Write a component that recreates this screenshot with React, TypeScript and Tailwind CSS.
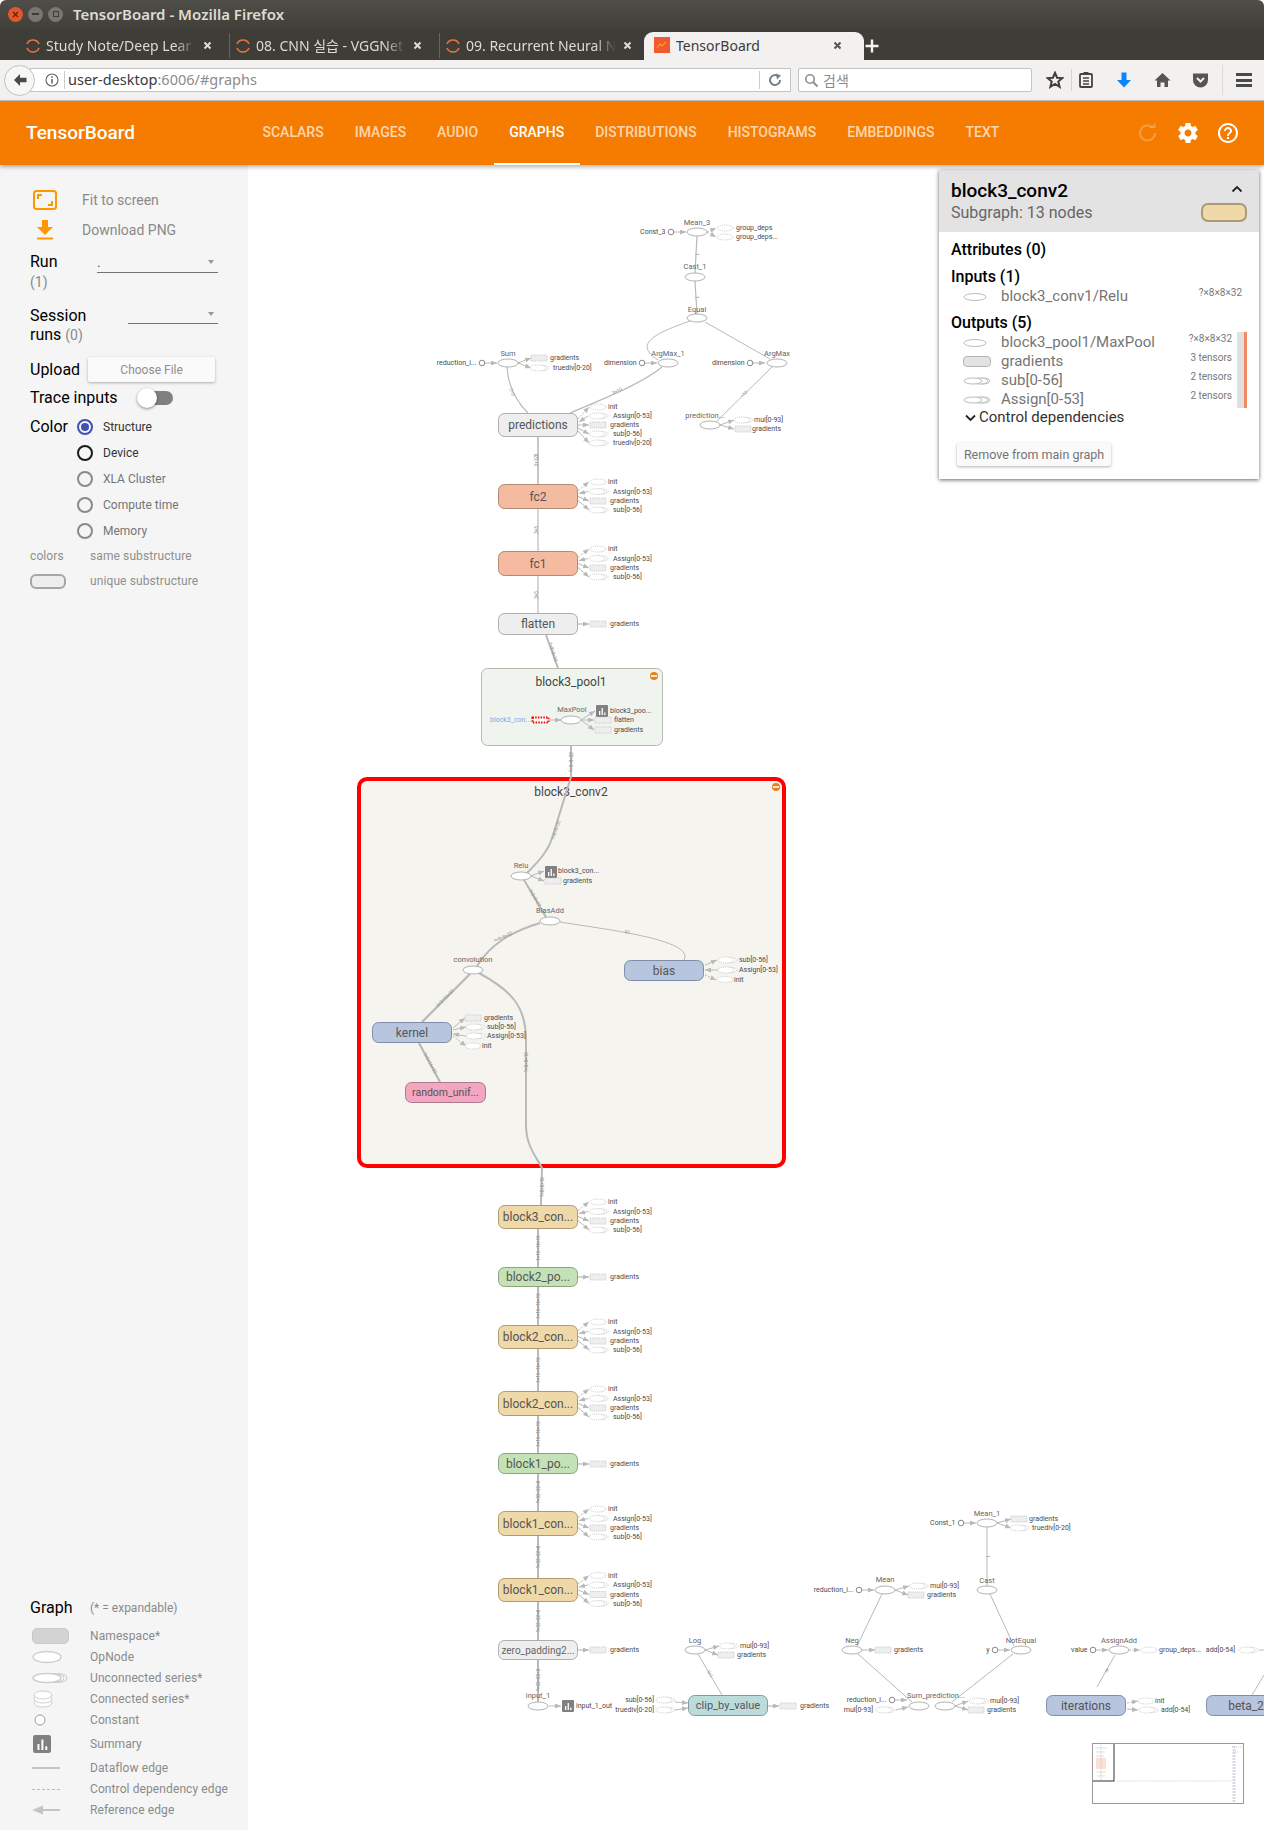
import React from "react";

const E = "#b9b9b9";
const T = "#4a4a4a";

function Spinner() {
  return (
    <svg width="16" height="16" viewBox="0 0 16 16" className="shrink-0">
      <path d="M2 6 A6.5 6.5 0 0 1 14 6" fill="none" stroke="#e8743b" strokeWidth="1.6" />
      <path d="M2 10 A6.5 6.5 0 0 0 14 10" fill="none" stroke="#e8743b" strokeWidth="1.6" />
    </svg>
  );
}

function TabX({ dark }: { dark?: boolean }) {
  return (
    <svg width="9" height="9" viewBox="0 0 9 9" className="shrink-0">
      <path d="M1.5 1.5 L7.5 7.5 M7.5 1.5 L1.5 7.5" stroke={dark ? "#555" : "#ddd"} strokeWidth="2" />
    </svg>
  );
}

function InactiveTab({ title }: { title: string }) {
  return (
    <div className="w-[210px] h-full flex items-center pl-[5px] shrink-0 border-r border-[#66655f]">
      <Spinner />
      <span className="ml-[5px] w-[150px] whitespace-nowrap text-[14px] text-[#dcdbd6] [font-family:'Noto_Sans','Noto_Sans_CJK_KR',sans-serif] [mask-image:linear-gradient(to_right,black_86%,transparent)]">
        {title}
      </span>
      <span className="ml-[7px]"><TabX /></span>
    </div>
  );
}

function TitleBar() {
  return (
    <div className="h-[30px] pb-[2px] flex items-center pl-[8px] bg-gradient-to-b from-[#4f4e48] to-[#403f3a] rounded-t-[6px]">
      <div className="flex gap-[5px] items-center">
        <div className="w-[15px] h-[15px] rounded-full bg-[#e2572b] text-[#5a2010] flex items-center justify-center"><svg width="7" height="7" viewBox="0 0 7 7"><path d="M1 1L6 6M6 1L1 6" stroke="#5a2010" strokeWidth="1.2" /></svg></div>
        <div className="w-[15px] h-[15px] rounded-full bg-[#77766f] flex items-center justify-center"><div className="w-[7px] h-[1.5px] bg-[#3d3c37]" /></div>
        <div className="w-[15px] h-[15px] rounded-full bg-[#77766f] flex items-center justify-center"><div className="w-[6px] h-[6px] border border-[#3d3c37]" /></div>
      </div>
      <span className="ml-[10px] text-[15px] font-semibold text-[#dfdbd2] [font-family:'Noto_Sans',sans-serif]">TensorBoard - Mozilla Firefox</span>
    </div>
  );
}

function TabStrip() {
  return (
    <div className="h-[30px] flex items-end pl-[20px] bg-[#3e3d38]">
      <div className="flex h-[25px] mb-[2px]">
        <InactiveTab title="Study Note/Deep Lear" />
        <InactiveTab title="08. CNN 실습 - VGGNet" />
        <InactiveTab title="09. Recurrent Neural N" />
      </div>
      <div className="h-[28px] pb-[2px] w-[220px] -ml-[6px] bg-[#f2f1ef] rounded-t-[9px] flex items-center pl-[10px] shrink-0">
        <svg width="16" height="16" viewBox="0 0 16 16" className="shrink-0">
          <rect width="16" height="16" fill="#f15a31" />
          <path d="M3 11L6 7L8 9L12 5" fill="none" stroke="#f7a21b" strokeWidth="1.2" />
        </svg>
        <span className="ml-[6px] w-[157px] text-[14px] text-[#3c3b37] [font-family:'Noto_Sans',sans-serif]">TensorBoard</span>
        <TabX dark />
      </div>
      <svg width="16" height="16" viewBox="0 0 16 16" className="ml-[0px] mb-[6px] shrink-0">
        <path d="M8 1.5V14.5M1.5 8H14.5" stroke="#f4f4f4" strokeWidth="2.4" />
      </svg>
    </div>
  );
}

function NavBar() {
  return (
    <div className="h-[41px] bg-[#f2f1ef] border-b border-[#c4c3c0] flex items-center pl-[4px] [font-family:'Noto_Sans','Noto_Sans_CJK_KR',sans-serif]">
      <div className="z-10 w-[31px] h-[31px] rounded-full bg-[#f7f7f6] border border-[#c2c2c0] flex items-center justify-center shrink-0">
        <svg width="16" height="16" viewBox="0 0 16 16"><path d="M8 2 L2 8 L8 14 V10.3 H14.5 V5.7 H8 Z" fill="#4a4a4a" /></svg>
      </div>
      <div className="-ml-[5px] w-[761px] h-[24px] bg-white border border-[#c4c4c4] flex items-center pl-[14px] shrink-0">
        <svg width="14" height="14" viewBox="0 0 14 14" className="shrink-0"><circle cx="7" cy="7" r="6" fill="none" stroke="#666" strokeWidth="1.1" /><rect x="6.2" y="6" width="1.6" height="4.5" fill="#666" /><rect x="6.2" y="3.3" width="1.6" height="1.6" fill="#666" /></svg>
        <div className="ml-[5px] w-px h-[18px] bg-[#ccc]" />
        <span className="ml-[3px] text-[14.5px] text-[#3a3a3a] w-[691px]">user-desktop<span className="text-[#8c8c8c]">:6006/#graphs</span></span>
        <div className="w-px h-[18px] bg-[#ccc]" />
        <svg width="14" height="14" viewBox="0 0 14 14" className="ml-[8px]"><path d="M12 7A5 5 0 1 1 9.5 2.7" fill="none" stroke="#7a8087" strokeWidth="2" /><path d="M8 0.5L13 2.5L9 6.5Z" fill="#7a8087" /></svg>
      </div>
      <div className="ml-[7px] w-[234px] h-[24px] bg-white border border-[#c4c4c4] rounded-[2px] flex items-center pl-[5px] shrink-0">
        <svg width="15" height="15" viewBox="0 0 15 15"><circle cx="6" cy="6" r="4.2" fill="none" stroke="#8a8f94" strokeWidth="1.6" /><path d="M9 9L13.5 13.5" stroke="#8a8f94" strokeWidth="2" /></svg>
        <span className="ml-[4px] text-[14px] text-[#8a8a8a] [font-family:'Noto_Sans_CJK_KR',sans-serif]">검색</span>
      </div>
      <div className="ml-[14px] flex items-center">
        <svg width="18" height="18" viewBox="0 0 18 18"><path d="M9 1.8L11.1 6.7L16.4 7.1L12.3 10.6L13.6 15.8L9 13L4.4 15.8L5.7 10.6L1.6 7.1L6.9 6.7Z" fill="none" stroke="#3f3f3f" strokeWidth="2" /></svg>
        <div className="ml-[7px] w-px h-[22px] bg-[#d5d4d1]" />
        <svg width="16" height="18" viewBox="0 0 16 18" className="ml-[6px]"><rect x="2" y="3" width="12" height="13" rx="1" fill="none" stroke="#444" strokeWidth="1.8" /><rect x="5.5" y="1" width="5" height="3" fill="#444" /><path d="M5 7H11M5 10H11M5 13H11" stroke="#444" strokeWidth="1.5" /></svg>
        <svg width="16" height="18" viewBox="0 0 16 18" className="ml-[22px]"><path d="M5.5 1.5H10.5V9H15L8 16.5L1 9H5.5Z" fill="#0a84ff" /></svg>
        <svg width="17" height="16" viewBox="0 0 17 16" className="ml-[22px]"><path d="M8.5 1L16.5 8.5H14V15H10.5V10.5H6.5V15H3V8.5H0.5Z" fill="#555" /></svg>
        <svg width="17" height="16" viewBox="0 0 17 16" className="ml-[21px]"><path d="M1 1.5H16V8A7.5 7.5 0 0 1 1 8Z" fill="#555" /><path d="M5 6L8.5 9.5L12 6" fill="none" stroke="#f2f1ef" strokeWidth="2" /></svg>
        <div className="ml-[13px] w-px h-[30px] bg-[#dcdbd8]" />
        <div className="ml-[13px] w-[16px] flex flex-col gap-[2.5px]">
          <div className="h-[3px] bg-[#4a4a4a]" /><div className="h-[3px] bg-[#4a4a4a]" /><div className="h-[3px] bg-[#4a4a4a]" />
        </div>
      </div>
    </div>
  );
}

const TABS = ["Scalars", "Images", "Audio", "Graphs", "Distributions", "Histograms", "Embeddings", "Text"];

function Header() {
  return (
    <div className="relative z-20 h-[64px] bg-[#f57c00] shadow-[0_2px_4px_rgba(0,0,0,0.3)] flex items-stretch pl-[26px] [font-family:Roboto,sans-serif]">
      <div className="w-[221px] flex items-center text-[19px] font-medium text-white">TensorBoard</div>
      <div className="flex">
        {TABS.map((t) => (
          <div key={t} className={"px-[15.5px] pt-[1px] flex items-center border-b-2 text-[14px] font-medium uppercase " + (t === "Graphs" ? "border-white text-white" : "border-transparent text-white/70")}>
            {t}
          </div>
        ))}
      </div>
      <div className="ml-auto mr-[24px] flex items-center gap-[16px]">
        <svg width="24" height="24" viewBox="0 0 24 24" fill="none" stroke="#ffffff" strokeOpacity="0.25" strokeWidth="2"><path d="M19 12A7.5 7.5 0 1 1 16.5 6.4" /><path d="M14 7H19.5V1.5" fill="#fff" fillOpacity="0.25" stroke="none" /></svg>
        <svg width="24" height="24" viewBox="0 0 24 24" fill="#fff"><path d="M19.43 12.98c.04-.32.07-.64.07-.98s-.03-.66-.07-.98l2.11-1.65c.19-.15.24-.42.12-.64l-2-3.46c-.12-.22-.39-.3-.61-.22l-2.49 1c-.52-.4-1.08-.73-1.69-.98l-.38-2.65C14.46 2.18 14.25 2 14 2h-4c-.25 0-.46.18-.49.42l-.38 2.65c-.61.25-1.17.59-1.69.98l-2.49-1c-.23-.09-.49 0-.61.22l-2 3.46c-.13.22-.07.49.12.64l2.11 1.65c-.04.32-.07.65-.07.98s.03.66.07.98l-2.11 1.65c-.19.15-.24.42-.12.64l2 3.46c.12.22.39.3.61.22l2.49-1c.52.4 1.08.73 1.69.98l.38 2.65c.03.24.24.42.49.42h4c.25 0 .46-.18.49-.42l.38-2.65c.61-.25 1.17-.59 1.69-.98l2.49 1c.23.09.49 0 .61-.22l2-3.46c.12-.22.07-.49-.12-.64l-2.11-1.65zM12 15.5c-1.93 0-3.5-1.57-3.5-3.5s1.57-3.5 3.5-3.5 3.5 1.57 3.5 3.5-1.57 3.5-3.5 3.5z" /></svg>
        <svg width="24" height="24" viewBox="0 0 24 24" fill="#fff"><path d="M11 18h2v-2h-2v2zm1-16C6.48 2 2 6.48 2 12s4.48 10 10 10 10-4.48 10-10S17.52 2 12 2zm0 18c-4.41 0-8-3.59-8-8s3.59-8 8-8 8 3.59 8 8-3.59 8-8 8zm0-14c-2.21 0-4 1.79-4 4h2c0-1.1.9-2 2-2s2 .9 2 2c0 2-3 1.75-3 5h2c0-2.25 3-2.5 3-5 0-2.21-1.79-4-4-4z" /></svg>
      </div>
    </div>
  );
}

function Caret() {
  return <div className="w-0 h-0 border-l-[3.5px] border-r-[3.5px] border-t-[4px] border-l-transparent border-r-transparent border-t-[#999]" />;
}

function Radio({ state, label }: { state: "on" | "focus" | "off"; label: string }) {
  const ring = state === "on" ? "border-[#3f51b5]" : state === "focus" ? "border-[#1a1a1a]" : "border-[#8a8a8a]";
  const txt = state === "off" ? "text-[#757575]" : "text-[#333]";
  return (
    <div className="h-[26px] flex items-center">
      <div className={"w-[16px] h-[16px] rounded-full border-2 flex items-center justify-center " + ring}>
        {state === "on" && <div className="w-[8px] h-[8px] rounded-full bg-[#3f51b5]" />}
      </div>
      <span className={"ml-[10px] pt-[1px] text-[12px] " + txt}>{label}</span>
    </div>
  );
}

function LegendRow({ icon, label, h = "h-[21px]" }: { icon: React.ReactNode; label: string; h?: string }) {
  return (
    <div className={"flex items-center " + h}>
      <div className="w-[60px] shrink-0 flex items-center">{icon}</div>
      <span className="whitespace-nowrap text-[12px] tracking-[0.1px] text-[#8a8a8a]">{label}</span>
    </div>
  );
}

function Bars({ size, rx = 1.5 }: { size: number; rx?: number }) {
  return (
    <svg width={size} height={size} viewBox="0 0 12 12">
      <rect width="12" height="12" rx={rx} fill="#808080" />
      <path d="M3 6V10H4.3V6ZM5.6 3V10H6.9V3ZM8.2 7.5V10H9.5V7.5Z" fill="#fff" />
    </svg>
  );
}

function Sidebar() {
  const ell = "fill-white stroke-[#cfcfcf]";
  return (
    <div className="w-[248px] shrink-0 bg-[#f5f5f5] flex flex-col justify-between pl-[30px] pr-[30px] pb-[9.5px] [font-family:Roboto,sans-serif]">
      <div className="pt-[20px]">
        <div className="h-[30px] flex items-center -ml-[30px]">
          <svg width="24" height="20" viewBox="0 0 24 20" className="ml-[33px]"><rect x="1" y="1" width="22" height="18" rx="2.5" fill="none" stroke="#ff9800" strokeWidth="2" /><path d="M5 9V5H9M19 11V15H15" fill="none" stroke="#ff9800" strokeWidth="2" /></svg>
          <span className="ml-[25px] text-[14px] text-[#8a8a8a]">Fit to screen</span>
        </div>
        <div className="h-[30px] flex items-center -ml-[30px]">
          <svg width="16" height="20" viewBox="0 0 16 20" className="ml-[37px]"><path d="M5 0H11V7H16L8 15L0 7H5Z" fill="#ff9800" /><rect y="17.5" width="16" height="2" fill="#ff9800" /></svg>
          <span className="ml-[29px] text-[14px] text-[#8a8a8a]">Download PNG</span>
        </div>
        <div className="h-[32px] pt-[1px] flex items-center justify-between">
          <span className="text-[16px] text-black">Run</span>
          <div className="w-[121px] h-[21px] mt-[3px] border-b border-[#737373] flex items-center justify-between text-[14px] text-[#555] pr-[4px] -translate-y-[1px]">
            <span className="leading-none">.</span>
            <Caret />
          </div>
        </div>
        <div className="h-[10px] flex items-center text-[14px] text-[#8a8a8a]">(1)</div>
        <div className="mt-[18.5px] h-[38px] flex items-start justify-between">
          <div className="text-[16px] leading-[19px] text-black">Session<br />runs <span className="text-[14px] text-[#8a8a8a]">(0)</span></div>
          <div className="w-[90px] h-[18px] border-b border-[#737373] flex items-center justify-end pr-[4px]"><Caret /></div>
        </div>
        <div className="mt-[12.5px] h-[26px] flex items-center">
          <span className="pt-[1px] text-[16px] text-black">Upload</span>
          <div className="ml-[8px] w-[127px] h-[25px] pt-[2px] bg-[#fafafa] rounded-[2px] shadow-[0_1px_3px_rgba(0,0,0,0.3)] flex items-center justify-center text-[12px] text-[#8f8f8f]">Choose File</div>
        </div>
        <div className="mt-[4px] h-[24px] flex items-center">
          <span className="text-[16px] text-black">Trace inputs</span>
          <div className="relative ml-[21px] w-[34px] h-[14px] rounded-full bg-[#808080]">
            <div className="absolute -left-[2px] -top-[3px] w-[20px] h-[20px] rounded-full bg-white shadow-[0_1px_3px_rgba(0,0,0,0.45)]" />
          </div>
        </div>
        <div className="mt-[3.5px] flex">
          <div className="w-[47px] h-[26px] flex items-center text-[16px] text-black">Color</div>
          <div>
            <Radio state="on" label="Structure" />
            <Radio state="focus" label="Device" />
            <Radio state="off" label="XLA Cluster" />
            <Radio state="off" label="Compute time" />
            <Radio state="off" label="Memory" />
          </div>
        </div>
        <div className="mt-[0.75px] h-[24px] flex items-center text-[12px] tracking-[0.1px] text-[#8f8f8f]"><span className="w-[60px]">colors</span><span>same substructure</span></div>
        <div className="h-[26px] flex items-center text-[12px] tracking-[0.1px] text-[#8f8f8f]">
          <div className="w-[60px]"><div className="w-[36px] h-[15px] rounded-[6px] bg-[#eeeeee] border-2 border-[#a6a6a6]" /></div>
          <span>unique substructure</span>
        </div>
      </div>
      <div>
        <div className="h-[22px] pt-[1px] flex items-center mb-[7.5px]">
          <span className="w-[60px] text-[16px] text-black">Graph</span>
          <span className="text-[12px] text-[#8a8a8a]">(* = expandable)</span>
        </div>
        <LegendRow label="Namespace*" icon={<div className="ml-[2px] w-[37px] h-[16px] rounded-[5px] bg-[#d3d3d3] border border-[#c9c9c9]" />} />
        <LegendRow label="OpNode" icon={<svg width="34" height="14"><ellipse cx="17" cy="7" rx="14" ry="5.5" className={ell} strokeWidth="1.5" /></svg>} />
        <LegendRow label="Unconnected series*" icon={<svg width="40" height="14"><ellipse cx="27" cy="7" rx="10" ry="4.5" className={ell} strokeWidth="1.2" /><ellipse cx="23" cy="7" rx="11" ry="4.5" className={ell} strokeWidth="1.2" /><ellipse cx="17" cy="7" rx="14" ry="4.5" className={ell} strokeWidth="1.5" /></svg>} />
        <LegendRow label="Connected series*" icon={<svg width="34" height="18"><ellipse cx="13" cy="13" rx="9" ry="4" className={ell} /><ellipse cx="13" cy="9" rx="9" ry="4" className={ell} /><ellipse cx="13" cy="5" rx="9" ry="4" className={ell} /></svg>} />
        <LegendRow label="Constant" icon={<svg width="34" height="14"><circle cx="10" cy="7" r="5" className="fill-white stroke-[#999]" strokeWidth="1" /></svg>} />
        <LegendRow h="h-[27px]" label="Summary" icon={<div className="ml-[3px]"><Bars size={18} /></div>} />
        <LegendRow label="Dataflow edge" icon={<div className="ml-[2px] w-[28px] h-[1.5px] bg-[#c4c4c4]" />} />
        <LegendRow label="Control dependency edge" icon={<div className="ml-[2px] w-[28px] border-t border-dashed border-[#bbb]" />} />
        <LegendRow label="Reference edge" icon={<svg width="34" height="12"><path d="M2 6L13 1.5V5H30V7H13V10.5Z" fill="#c4c4c4" /></svg>} />
      </div>
    </div>
  );
}

/* ---------- graph primitives ---------- */
function Op({ x, y, label, lx = 0, ly = -10 }: { x: number; y: number; label?: string; lx?: number; ly?: number }) {
  return (
    <g>
      <ellipse cx={x} cy={y} rx="10" ry="4" fill="#fff" stroke="#b3b3b3" strokeWidth="1" />
      {label && <text x={x + lx} y={y + ly} textAnchor="middle" dominantBaseline="central" fontSize="7.5" fill="#666">{label}</text>}
    </g>
  );
}

function Const({ x, y, label }: { x: number; y: number; label: string }) {
  return (
    <g>
      <text x={x - 5.5} y={y} textAnchor="end" dominantBaseline="central" fontSize="7" fill={T}>{label}</text>
      <circle cx={x} cy={y} r="2.8" fill="#fff" stroke="#888" strokeWidth="1" />
      <path d={`M${x + 3} ${y}H${x + 15}`} stroke={E} markerEnd="url(#ar)" fill="none" />
    </g>
  );
}

type K = "o" | "s" | "r";
function Aux({ x, y, k, label, tx, end }: { x: number; y: number; k: K; label: string; tx: number; end?: boolean }) {
  const dash = "1.2 1";
  const c = "#c2c2c2";
  return (
    <g>
      {k === "r" && <rect x={x - 8} y={y - 3} width="16" height="6" fill="#eeeeee" stroke={c} strokeWidth="0.8" strokeDasharray={dash} />}
      {k === "o" && <ellipse cx={x} cy={y} rx="8" ry="3" fill="#fff" stroke={c} strokeWidth="0.8" strokeDasharray={dash} />}
      {k === "s" && (
        <>
          <ellipse cx={x + 3} cy={y} rx="7" ry="2.6" fill="#fff" stroke={c} strokeWidth="0.8" strokeDasharray={dash} />
          <ellipse cx={x - 1} cy={y} rx="8" ry="3" fill="#fff" stroke={c} strokeWidth="0.8" strokeDasharray={dash} />
        </>
      )}
      <text x={tx} y={y} textAnchor={end ? "end" : "start"} dominantBaseline="central" fontSize="7" fill={T}>{label}</text>
    </g>
  );
}

function Line({ d, w = 1, dash, arrow, c = E }: { d: string; w?: number; dash?: boolean; arrow?: boolean; c?: string }) {
  return <path d={d} fill="none" stroke={c} strokeWidth={w} strokeDasharray={dash ? "2 1.5" : undefined} markerEnd={arrow ? "url(#ar)" : undefined} />;
}

function Tick({ x, y, r, t }: { x: number; y: number; r: number; t: string }) {
  return <text x={x} y={y} fontSize="4.6" fill="#8d8d8d" textAnchor="middle" dominantBaseline="central" transform={`rotate(${r} ${x} ${y})`}>{t}</text>;
}

function Box({ x, y, w = 80, h, fill, stroke, label, size = 12, color = "#555" }: { x: number; y: number; w?: number; h: number; fill: string; stroke: string; label: string; size?: number; color?: string }) {
  return (
    <g>
      <rect x={x + 0.5} y={y + 0.5} width={w - 1} height={h - 1} rx="6" fill={fill} stroke={stroke} strokeWidth="1" />
      <text x={x + w / 2} y={y + h / 2} textAnchor="middle" dominantBaseline="central" fontSize={size} fill={color}>{label}</text>
    </g>
  );
}

function Std4({ cy, sx = 578 }: { cy: number; sx?: number }) {
  const ys = [cy - 14.5, cy - 5, cy + 4.5, cy + 13.5];
  return (
    <g>
      <Line d={`M${sx} ${cy - 6}L${sx + 11} ${ys[0]}`} dash arrow />
      <Line d={`M${sx + 10} ${ys[1]}L${sx + 1} ${cy - 3}`} arrow />
      <Line d={`M${sx} ${cy}L${sx + 11} ${ys[2]}`} arrow />
      <Line d={`M${sx} ${cy + 4}L${sx + 11} ${ys[3]}`} arrow />
      <Aux x={sx + 20} y={ys[0]} k="o" label="init" tx={sx + 30} />
      <Aux x={sx + 20} y={ys[1]} k="s" label="Assign[0-53]" tx={sx + 35} />
      <Aux x={sx + 20} y={ys[2]} k="r" label="gradients" tx={sx + 32} />
      <Aux x={sx + 20} y={ys[3]} k="s" label="sub[0-56]" tx={sx + 35} />
    </g>
  );
}

function Grad({ cy, sx = 578 }: { cy: number; sx?: number }) {
  return (
    <g>
      <Line d={`M${sx} ${cy}H${sx + 11}`} arrow w={1.2} />
      <Aux x={sx + 20} y={cy} k="r" label="gradients" tx={sx + 32} />
    </g>
  );
}

function Sum({ x, y }: { x: number; y: number }) {
  return (
    <g transform={`translate(${x} ${y})`}>
      <rect width="12" height="12" rx="1" fill="#808080" />
      <path d="M3 6V10H4.3V6ZM5.6 3V10H6.9V3ZM8.2 7.5V10H9.5V7.5Z" fill="#fff" />
    </g>
  );
}

const TAN = { fill: "#efd9a9", stroke: "#b09b71" };
const GREEN = { fill: "#c5e2b6", stroke: "#8da380" };
const GRAY = { fill: "#eeeeee", stroke: "#aeaeae" };
const BLUE = { fill: "#b8c5de", stroke: "#7f8da8" };
const SALMON = { fill: "#f4bba0", stroke: "#b08a72" };

function Graph() {
  return (
    <svg viewBox="248 165 1016 1665" className="block w-full h-full [font-family:Roboto,sans-serif]">
      <defs>
        <marker id="ar" markerUnits="userSpaceOnUse" markerWidth="6" markerHeight="5" refX="6" refY="2.5" orient="auto">
          <path d="M0 0L6 2.5L0 5Z" fill="#b9b9b9" />
        </marker>
      </defs>

      {/* top cluster */}
      <Line d="M697 236L695 273" w={1.2} />
      <Line d="M695 281L697 314" w={1.2} />
      <Tick x={696} y={254} r={90} t="1" />
      <Tick x={696} y={297} r={90} t="1" />
      <Line d="M690 321C650 335 635 345 658 360" />
      <Line d="M705 322L770 359" />
      <Line d="M772 367L716 422" />
      <Line d="M507 367C508 385 515 400 528 413" w={1.2} />
      <Line d="M662 367C640 385 600 400 570 413" w={1.2} />
      <Tick x={512} y={392} r={70} t="2×3" />
      <Tick x={617} y={391} r={-26} t="3×10" />
      <Tick x={744} y={394} r={-45} t="×10" />

      <Const x={671} y={232} label="Const_3" />
      <Op x={697} y={232} label="Mean_3" />
      <Line d="M707 232L716 228" dash arrow />
      <Line d="M707 232L716 237" dash arrow />
      <Aux x={725} y={228} k="o" label="group_deps" tx={736} />
      <Aux x={725} y={237} k="o" label="group_deps..." tx={736} />
      <Op x={695} y={277} label="Cast_1" ly={-11} />
      <Op x={697} y={318} label="Equal" ly={-9} />
      <Const x={642} y={363} label="dimension" />
      <Op x={668} y={363} label="ArgMax_1" ly={-10} />
      <Const x={750} y={363} label="dimension" />
      <Op x={777} y={363} label="ArgMax" ly={-10} />
      <Const x={482} y={363} label="reduction_i..." />
      <Op x={508} y={363} label="Sum" />
      <Line d="M518 363L531 358" arrow />
      <Line d="M518 363L531 368" arrow />
      <Aux x={539} y={358} k="r" label="gradients" tx={550} />
      <Aux x={539} y={368} k="s" label="truediv[0-20]" tx={553} />

      <Op x={710} y={425} label="prediction..." lx={-5} />
      <Line d="M720 425L734 420" arrow />
      <Line d="M720 425L734 429" arrow />
      <Aux x={743} y={420} k="s" label="mul[0-93]" tx={754} />
      <Aux x={743} y={429} k="r" label="gradients" tx={752} />

      {/* main column */}
      <Line d="M538 437V484" w={1.6} />
      <Tick x={536} y={460} r={-90} t="3×128" />
      <Line d="M538 509V551" w={1.2} />
      <Tick x={536} y={530} r={-90} t="3×3" />
      <Line d="M538 576V613" w={1.2} />
      <Tick x={536} y={595} r={-90} t="3×3" />
      <Line d="M546 635L558 668" w={2} />
      <Tick x={553} y={652} r={72} t="?×8×8×32" />
      <Line d="M571 745V778" w={2} />
      <Tick x={571} y={762} r={-90} t="?×8×8×32" />

      <Box x={498} y={413} h={24} {...GRAY} label="predictions" />
      {(() => {
        const ys = [407, 416, 425, 434, 443];
        return (
          <g>
            <Line d={`M578 419L589 ${ys[0]}`} dash arrow />
            <Line d={`M588 ${ys[1]}L579 422`} arrow />
            <Line d={`M578 425L589 ${ys[2]}`} arrow />
            <Line d={`M578 428L589 ${ys[3]}`} arrow />
            <Line d={`M578 431L589 ${ys[4]}`} arrow />
            <Aux x={598} y={ys[0]} k="o" label="init" tx={608} />
            <Aux x={598} y={ys[1]} k="s" label="Assign[0-53]" tx={613} />
            <Aux x={598} y={ys[2]} k="r" label="gradients" tx={610} />
            <Aux x={598} y={ys[3]} k="s" label="sub[0-56]" tx={613} />
            <Aux x={598} y={ys[4]} k="s" label="truediv[0-20]" tx={613} />
          </g>
        );
      })()}
      <Box x={498} y={484} h={25} {...SALMON} label="fc2" />
      <Std4 cy={496.5} />
      <Box x={498} y={551} h={25} {...SALMON} label="fc1" />
      <Std4 cy={563.5} />
      <Box x={498} y={613} h={22} {...GRAY} label="flatten" />
      <Grad cy={624} />

      {/* block3_pool1 */}
      <rect x={481.5} y={668.5} width={181} height={77} rx="6" fill="#f0f4ee" stroke="#b5b9ae" strokeWidth="1" />
      <text x={571} y={682} textAnchor="middle" dominantBaseline="central" fontSize="12" fill="#444">block3_pool1</text>
      <circle cx={654} cy={676} r="4" fill="#e8811c" />
      <rect x={651} y={675.2} width={6} height={1.6} fill="#fff" />
      <text x={490} y={720} dominantBaseline="central" fontSize="7" fill="#7aa6e8">block3_con...</text>
      <rect x={532.5} y={717.5} width={16} height={5} fill="#fff" stroke="#ff0000" strokeWidth="2" strokeDasharray="1.5 1.2" />
      <Line d="M549 720H561" arrow />
      <Op x={571} y={720} label="MaxPool" lx={1} ly={-11} />
      <Line d="M581 720L595 711" arrow />
      <Line d="M581 720L594 720" arrow />
      <Line d="M581 720L594 730" arrow />
      <Sum x={596} y={705} />
      <text x={610} y={711} dominantBaseline="central" fontSize="7" fill={T}>block3_poo...</text>
      <Aux x={603} y={720} k="r" label="flatten" tx={614} />
      <Aux x={603} y={730} k="r" label="gradients" tx={614} />

      {/* block3_conv2 */}
      <rect x={359} y={779} width={425} height={387} rx="8" fill="#f5f4ef" stroke="#ff0000" strokeWidth="4" />
      <text x={571} y={792} textAnchor="middle" dominantBaseline="central" fontSize="12" fill="#444">block3_conv2</text>
      <circle cx={776} cy={787} r="4" fill="#e8811c" />
      <rect x={773} y={786.2} width={6} height={1.6} fill="#fff" />
      <Line d="M571 777L553 835C549 850 540 860 527 873" w={2} />
      <Tick x={556} y={830} r={-72} t="?×8×8×32" />
      <Line d="M524 880L546 917" w={2} />
      <Tick x={535} y={898} r={60} t="?×8×8×32" />
      <Line d="M540 923C510 932 490 945 477 966" w={2} />
      <Tick x={503} y={937} r={-25} t="?×8×8×32" />
      <Line d="M560 922C610 930 695 940 684 960" w={1} />
      <Tick x={627} y={932} r={8} t="32" />
      <Line d="M470 974L422 1022" w={2.2} />
      <Tick x={445} y={998} r={-45} t="3×3×16×32" />
      <Line d="M419 1043L440 1082" w={2.2} />
      <Tick x={430} y={1063} r={61} t="3×3×16×32" />
      <Line d="M479 973C510 990 526 1005 526 1040V1125C526 1145 535 1155 542 1168L541 1205" w={2} />
      <Tick x={526} y={1062} r={-90} t="?×8×8×16" />
      <Tick x={542} y={1187} r={-90} t="?×8×8×16" />

      <Op x={521} y={876} label="Relu" ly={-11} />
      <Line d="M531 876L544 871" arrow />
      <Line d="M531 876L544 881" arrow />
      <Sum x={545} y={866} />
      <text x={558} y={871} dominantBaseline="central" fontSize="7" fill={T}>block3_con...</text>
      <Aux x={553} y={881} k="r" label="gradients" tx={563} />
      <Op x={550} y={921} label="BiasAdd" ly={-11} />
      <Op x={473} y={970} label="convolution" ly={-11} />

      <Box x={624} y={960} h={21} {...BLUE} label="bias" />
      <Line d="M705 965L717 960" arrow />
      <Line d="M718 970L705 970" arrow />
      <Line d="M705 975L716 980" dash arrow />
      <Aux x={727} y={960} k="s" label="sub[0-56]" tx={739} />
      <Aux x={727} y={970} k="s" label="Assign[0-53]" tx={739} />
      <Aux x={725} y={979.5} k="o" label="init" tx={734} />

      <Box x={372} y={1022} h={21} {...BLUE} label="kernel" />
      <Line d="M453 1028L465 1018" arrow />
      <Line d="M453 1030L466 1027" arrow />
      <Line d="M466 1036L453 1034" arrow />
      <Line d="M453 1036L466 1046" dash arrow />
      <Aux x={473} y={1018} k="r" label="gradients" tx={484} />
      <Aux x={475} y={1027} k="s" label="sub[0-56]" tx={487} />
      <Aux x={475} y={1036} k="s" label="Assign[0-53]" tx={487} />
      <Aux x={473} y={1046} k="o" label="init" tx={482} />

      <Box x={405} y={1082} h={21} w={81} fill="#f4a6c0" stroke="#ab7c8f" size={10.5} label="random_unif..." />

      {/* lower column */}
      <Line d="M538 1229V1267" w={2} />
      <Tick x={538} y={1248} r={-90} t="1×16×16×16" />
      <Line d="M538 1287V1325" w={2} />
      <Tick x={538} y={1306} r={-90} t="1×16×16×16" />
      <Line d="M538 1349V1391" w={2} />
      <Tick x={538} y={1370} r={-90} t="1×16×16×16" />
      <Line d="M538 1416V1453" w={2} />
      <Tick x={538} y={1434} r={-90} t="1×16×16×16" />
      <Line d="M538 1474V1511" w={2} />
      <Tick x={538} y={1492} r={-90} t="?×32×32×8" />
      <Line d="M538 1536V1578" w={2} />
      <Tick x={538} y={1557} r={-90} t="?×32×32×8" />
      <Line d="M538 1602V1640" w={2} />
      <Tick x={538} y={1621} r={-90} t="?×32×32×8" />
      <Line d="M538 1660V1702" w={2} />
      <Tick x={538} y={1680} r={-90} t="?×32×32×3" />

      <Box x={498} y={1205} h={24} {...TAN} label="block3_con..." />
      <Std4 cy={1216.5} />
      <Box x={498} y={1267} h={20} {...GREEN} label="block2_po..." />
      <Grad cy={1277} />
      <Box x={498} y={1325} h={24} {...TAN} label="block2_con..." />
      <Std4 cy={1336.5} />
      <Box x={498} y={1391} h={25} {...TAN} label="block2_con..." />
      <Std4 cy={1403.5} />
      <Box x={498} y={1453} h={21} {...GREEN} label="block1_po..." />
      <Grad cy={1464} />
      <Box x={498} y={1511} h={25} {...TAN} label="block1_con..." />
      <Std4 cy={1523.5} />
      <Box x={498} y={1578} h={24} {...TAN} label="block1_con..." />
      <Std4 cy={1590} />
      <Box x={498} y={1640} h={20} {...GRAY} label="zero_padding2..." size={10} color="#666" />
      <Grad cy={1650} />

      <Op x={538} y={1706} label="input_1" ly={-11} />
      <Line d="M549 1706H561" arrow />
      <Sum x={562} y={1700} />
      <text x={576} y={1706} dominantBaseline="central" fontSize="7" fill={T}>input_1_out</text>

      <Aux x={665} y={1700} k="s" label="sub[0-56]" tx={654} end />
      <Aux x={665} y={1710} k="s" label="truediv[0-20]" tx={654} end />
      <Line d="M675 1702L688 1703" arrow />
      <Line d="M675 1710L688 1708" arrow />
      <Line d="M722 1695L698 1654" />
      <Tick x={710} y={1674} r={60} t="3×1" />
      <Box x={688} y={1695} h={21} fill="#bcdcdc" stroke="#7f9c9c" size={11} label="clip_by_value" />
      <Grad cy={1706} sx={768} />
      <Op x={695} y={1650} label="Log" ly={-10} />
      <Line d="M705 1650L719 1646" arrow />
      <Line d="M705 1650L718 1655" arrow />
      <Aux x={728} y={1646} k="s" label="mul[0-93]" tx={740} />
      <Aux x={726} y={1655} k="r" label="gradients" tx={737} />

      {/* right cluster */}
      <Line d="M987 1527V1586" />
      <Tick x={987} y={1556} r={90} t="1" />
      <Line d="M857 1646L882 1594" />
      <Line d="M1014 1646L990 1594" />
      <Line d="M858 1654L912 1702" />
      <Line d="M1013 1654L952 1702" />
      <Const x={961} y={1523} label="Const_1" />
      <Op x={987} y={1523} label="Mean_1" />
      <Line d="M997 1523L1011 1519" arrow />
      <Line d="M997 1523L1011 1528" arrow />
      <Aux x={1019} y={1519} k="r" label="gradients" tx={1029} />
      <Aux x={1019} y={1528} k="s" label="truediv[0-20]" tx={1032} />
      <Op x={987} y={1590} label="Cast" />
      <Const x={859} y={1590} label="reduction_i..." />
      <Op x={885} y={1590} label="Mean" ly={-11} />
      <Line d="M895 1590L909 1586" arrow />
      <Line d="M895 1590L908 1595" arrow />
      <Aux x={918} y={1586} k="s" label="mul[0-93]" tx={930} />
      <Aux x={916} y={1595} k="r" label="gradients" tx={927} />
      <Op x={852} y={1650} label="Neg" />
      <Line d="M862 1650H875" arrow />
      <Aux x={883} y={1650} k="r" label="gradients" tx={894} />
      <Const x={995} y={1650} label="y" />
      <Op x={1021} y={1650} label="NotEqual" />
      <Const x={892} y={1700} label="reduction_i..." />
      <Aux x={885} y={1710} k="s" label="mul[0-93]" tx={873} end />
      <Line d="M896 1710L908 1707" arrow />
      <Op x={919} y={1706} />
      <Op x={945} y={1706} />
      <text x={936} y={1695} textAnchor="middle" dominantBaseline="central" fontSize="7.5" fill="#666">Sum_prediction...</text>
      <Line d="M955 1706L968 1701" arrow />
      <Line d="M955 1706L968 1710" arrow />
      <Aux x={978} y={1701} k="s" label="mul[0-93]" tx={990} />
      <Aux x={976} y={1710} k="r" label="gradients" tx={987} />

      <Const x={1093} y={1650} label="value" />
      <Op x={1119} y={1650} label="AssignAdd" />
      <Line d="M1129 1650H1140" dash arrow />
      <Aux x={1149} y={1650} k="o" label="group_deps..." tx={1159} />
      <Line d="M1115 1655L1097 1687" />
      <Tick x={1107} y={1670} r={-60} t="≫" />
      <Box x={1046} y={1695} h={21} {...BLUE} label="iterations" />
      <Line d="M1127 1703L1138 1701" dash arrow />
      <Line d="M1127 1709L1138 1710" w={1.2} arrow />
      <Aux x={1146} y={1701} k="o" label="init" tx={1155} />
      <Aux x={1148} y={1710} k="s" label="add[0-54]" tx={1161} />

      <Aux x={1248} y={1650} k="s" label="add[0-54]" tx={1235} end />
      <Line d="M1259 1650H1264" />
      <Line d="M1252 1695L1264 1675" />
      <Box x={1206} y={1695} h={21} {...BLUE} label="beta_2" />
    </svg>
  );
}

function InfoRow({ icon, name, size, pr }: { icon: React.ReactNode; name: string; size: string; pr?: boolean }) {
  return (
    <div className={"h-[19px] flex items-center " + (pr ? "pr-[5px]" : "")}>
      <div className="w-[50px] pl-[12px] flex items-center">{icon}</div>
      <span className="flex-1 text-[15px] text-[#757575]">{name}</span>
      <span className="text-[10px] text-[#777] -translate-y-[4px]">{size}</span>
    </div>
  );
}

function SmallEll() {
  return <svg width="24" height="10"><ellipse cx="12" cy="5" rx="11" ry="3.5" fill="#fff" stroke="#bdbdbd" /></svg>;
}
function SmallSeries() {
  return <svg width="30" height="10"><ellipse cx="20" cy="5" rx="7" ry="3" fill="#fff" stroke="#bdbdbd" /><ellipse cx="17" cy="5" rx="8" ry="3" fill="#fff" stroke="#bdbdbd" /><ellipse cx="10" cy="5" rx="9" ry="3" fill="#fff" stroke="#bdbdbd" /></svg>;
}

function InfoCard() {
  return (
    <div className="absolute top-[5px] right-[5px] w-[320px] bg-white shadow-[0_1px_4px_rgba(0,0,0,0.6)] [font-family:Roboto,sans-serif]">
      <div className="h-[62px] bg-[#e3e3e3] px-[12px] pt-[10px] flex justify-between">
        <div className="leading-[22px]">
          <div className="text-[19px] font-medium text-black">block3_conv2</div>
          <div className="text-[16px] text-[#666]">Subgraph: 13 nodes</div>
        </div>
        <div className="flex flex-col items-end pt-[4px]">
          <svg width="14" height="10" viewBox="0 0 14 10" className="mr-[3px]"><path d="M2.5 7.5L7 3L11.5 7.5" fill="none" stroke="#222" strokeWidth="1.8" /></svg>
          <div className="mt-[9px] w-[46px] h-[19px] rounded-[7px] bg-[#efd9a9] border-2 border-[#ab9a74]" />
        </div>
      </div>
      <div className="px-[12px] pt-[7px] pb-[13px]">
        <div className="h-[22px] flex items-center text-[16px] font-medium text-black">Attributes (0)</div>
        <div className="mt-[6px] h-[20px] flex items-center text-[16px] font-medium text-black">Inputs (1)</div>
        <InfoRow pr icon={<SmallEll />} name="block3_conv1/Relu" size="?×8×8×32" />
        <div className="mt-[7px] h-[20px] flex items-center text-[16px] font-medium text-black">Outputs (5)</div>
        <div className="flex gap-[5px]">
          <div className="flex-1">
            <InfoRow icon={<SmallEll />} name="block3_pool1/MaxPool" size="?×8×8×32" />
            <InfoRow icon={<div className="w-[28px] h-[11px] rounded-[4px] bg-[#e3e3e3] border border-[#b5b5b5]" />} name="gradients" size="3 tensors" />
            <InfoRow icon={<SmallSeries />} name="sub[0-56]" size="2 tensors" />
            <InfoRow icon={<SmallSeries />} name="Assign[0-53]" size="2 tensors" />
          </div>
          <div className="w-[10px] h-[76px] -mt-[1px] bg-[#e0e0e0] flex justify-end"><div className="w-[3px] h-full bg-[#ef8a62]" /></div>
        </div>
        <div className="h-[17px] flex items-center pl-[12px] text-[15px] text-[#333]">
          <svg width="16" height="10" viewBox="0 0 16 10"><path d="M3 2.5L7.5 7L12 2.5" fill="none" stroke="#222" strokeWidth="1.8" /></svg>
          <span>Control dependencies</span>
        </div>
        <div className="mt-[17px] ml-[6px] w-[154px] h-[23px] pt-[1px] rounded-[2px] bg-[#fafafa] shadow-[0_1px_3px_rgba(0,0,0,0.3)] flex items-center justify-center text-[12.5px] text-[#757575]">
          Remove from main graph
        </div>
      </div>
    </div>
  );
}

function Minimap() {
  return (
    <div className="absolute right-[20px] bottom-[26px] w-[152px] h-[61px] bg-white/90 border border-[#999]">
      <svg viewBox="0 0 150 59" className="block w-full h-full">
        <rect x="3" y="14" width="10" height="11" fill="#f6cdb8" opacity="0.6" />
        <path d="M8 1V36" stroke="#c8c8c8" strokeDasharray="1 1" />
        <path d="M2 4H14M3 8H12M3 12H11M4 28H13M4 32H12" stroke="#d4d4d4" strokeWidth="0.8" />
        <path d="M24 37H139" stroke="#cfe0dc" strokeDasharray="1.5 1" />
        <path d="M141 2V58" stroke="#d5dbe6" strokeWidth="3" strokeDasharray="2 1" />
        <path d="M139 3H149M140 8H146" stroke="#ccc" strokeDasharray="1 1" />
        <rect x="-1" y="-1" width="22" height="38" fill="none" stroke="#333" strokeWidth="1" />
      </svg>
    </div>
  );
}

export default function App() {
  return (
    <div className="w-[1264px] h-[1830px] flex flex-col bg-white overflow-hidden">
      <TitleBar />
      <TabStrip />
      <NavBar />
      <Header />
      <div className="flex-1 flex min-h-0">
        <Sidebar />
        <div className="relative flex-1 min-w-0 bg-white">
          <Graph />
          <InfoCard />
          <Minimap />
        </div>
      </div>
    </div>
  );
}
